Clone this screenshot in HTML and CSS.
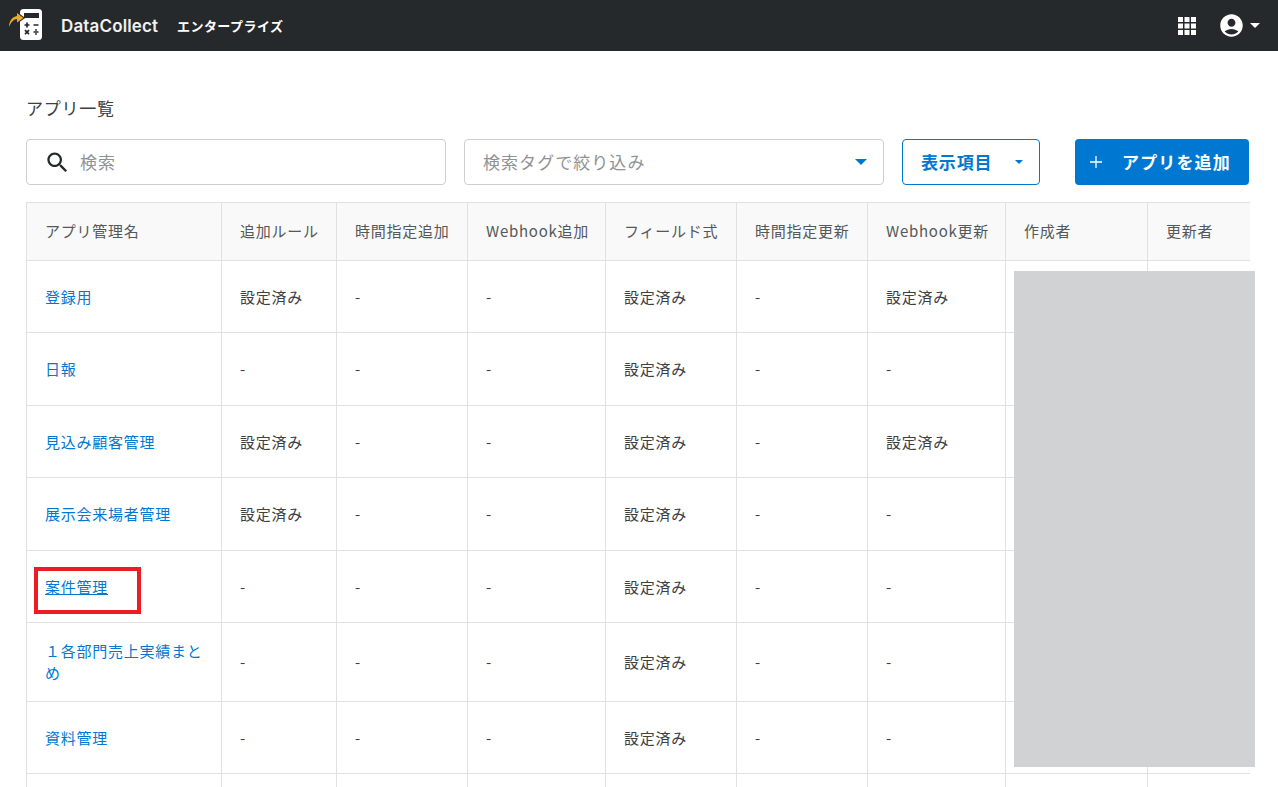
FILE: index.html
```html
<!DOCTYPE html>
<html lang="ja">
  <head>
    <meta charset="UTF-8" />
    <meta name="viewport" content="width=device-width, initial-scale=1.0" />
    <title>アプリ一覧</title>
    <link rel="stylesheet" href="styles.css">
  </head>
  <body>
    <header class="app-header">
      <div class="brand">
        <svg class="brand-logo" width="36" height="33" viewBox="0 0 36 33">
          <rect x="12" y="0" width="22" height="31" rx="3.500" fill="#fff" />
          <rect x="16" y="4" width="15" height="5" fill="#25292b" />
          <path d="M19 13.500v5M16.500 16h5M25.500 16h5M17 21.200l4 4M21 21.200l-4 4M25.500 23h5" stroke="#25292b" stroke-width="1.700" fill="none" />
          <circle cx="28" cy="21" r=".9" fill="#25292b" />
          <circle cx="28" cy="25" r=".9" fill="#25292b" />
          <path d="M1 18C1 12 4 8 9 7V4l6.500 5L9 13.500V10C6 10 3 13 1 18z" fill="#e9a825" stroke="#25292b" stroke-width="2" paint-order="stroke" />
        </svg>
        <span class="brand-name">DataCollect</span>
        <span class="brand-plan">エンタープライズ</span>
      </div>
      <div class="header-actions">
        <svg class="apps-icon" width="20" height="20" viewBox="0 0 20 20" fill="#fff">
          <rect x="1" y="1" width="5" height="5" /><rect x="7.500" y="1" width="5" height="5" /><rect x="14" y="1" width="5" height="5" />
          <rect x="1" y="7.500" width="5" height="5" /><rect x="7.500" y="7.500" width="5" height="5" /><rect x="14" y="7.500" width="5" height="5" />
          <rect x="1" y="14" width="5" height="5" /><rect x="7.500" y="14" width="5" height="5" /><rect x="14" y="14" width="5" height="5" />
        </svg>
        <svg class="account-icon" width="27" height="27" viewBox="0 0 24 24" fill="#fff">
          <path d="M12 2C6.480 2 2 6.480 2 12s4.480 10 10 10 10-4.480 10-10S17.520 2 12 2zm0 4c1.930 0 3.500 1.570 3.500 3.500S13.930 13 12 13s-3.500-1.570-3.500-3.500S10.070 6 12 6zm0 14c-2.030 0-4.430-.82-6.140-2.880C7.550 15.800 9.680 15 12 15s4.450.8 6.140 2.120C16.430 19.180 14.030 20 12 20z" />
        </svg>
        <span class="caret caret-white"></span>
      </div>
    </header>

    <main class="page">
      <h1 class="page-title">アプリ一覧</h1>

      <div class="toolbar">
        <label class="field search-field">
          <svg width="27" height="27" viewBox="0 0 24 24" fill="#25292b">
            <path d="M15.500 14h-.79l-.28-.27C15.410 12.590 16 11.110 16 9.500 16 5.910 13.090 3 9.500 3S3 5.910 3 9.500 5.910 16 9.500 16c1.610 0 3.090-.59 4.230-1.570l.27.28v.79l5 4.990L20.490 19l-4.990-5zm-6 0C7.010 14 5 11.990 5 9.500S7.010 5 9.500 5 14 7.010 14 9.500 11.990 14 9.500 14z" />
          </svg>
          <input type="text" placeholder="検索" />
        </label>
        <div class="field tag-field">
          <span class="tag-placeholder">検索タグで絞り込み</span>
          <span class="caret caret-blue"></span>
        </div>
        <button class="columns-btn">表示項目<span class="caret caret-blue-small"></span></button>
        <button class="add-btn">
          <svg width="14" height="14" viewBox="0 0 14 14"><path d="M7 1v12M1 7h12" stroke="#fff" stroke-width="1.300" fill="none" /></svg>
          アプリを追加
        </button>
      </div>

      <table class="app-table">
        <colgroup>
          <col class="col-name" /><col class="col-rule" /><col class="col-a" /><col class="col-b" /><col class="col-a" /><col class="col-a" /><col class="col-b" /><col class="col-c" /><col class="col-d" />
        </colgroup>
        <thead>
          <tr>
            <th>アプリ管理名</th>
            <th>追加ルール</th>
            <th>時間指定追加</th>
            <th>Webhook追加</th>
            <th>フィールド式</th>
            <th>時間指定更新</th>
            <th>Webhook更新</th>
            <th>作成者</th>
            <th>更新者</th>
          </tr>
        </thead>
        <tbody>
          <tr><td><a href="#">登録用</a></td><td>設定済み</td><td>-</td><td>-</td><td>設定済み</td><td>-</td><td>設定済み</td><td></td><td></td></tr>
          <tr><td><a href="#">日報</a></td><td>-</td><td>-</td><td>-</td><td>設定済み</td><td>-</td><td>-</td><td></td><td></td></tr>
          <tr><td><a href="#">見込み顧客管理</a></td><td>設定済み</td><td>-</td><td>-</td><td>設定済み</td><td>-</td><td>設定済み</td><td></td><td></td></tr>
          <tr><td><a href="#">展示会来場者管理</a></td><td>設定済み</td><td>-</td><td>-</td><td>設定済み</td><td>-</td><td>-</td><td></td><td></td></tr>
          <tr><td><a class="is-hover" href="#">案件管理</a></td><td>-</td><td>-</td><td>-</td><td>設定済み</td><td>-</td><td>-</td><td></td><td></td></tr>
          <tr><td><a href="#">１各部門売上実績まとめ</a></td><td>-</td><td>-</td><td>-</td><td>設定済み</td><td>-</td><td>-</td><td></td><td></td></tr>
          <tr><td><a href="#">資料管理</a></td><td>-</td><td>-</td><td>-</td><td>設定済み</td><td>-</td><td>-</td><td></td><td></td></tr>
          <tr><td></td><td></td><td></td><td></td><td></td><td></td><td></td><td></td><td></td></tr>
        </tbody>
      </table>

      <!-- 注釈と墨消し -->
      <div class="mark-box"></div>
      <div class="redact-box"></div>
    </main>
  </body>
</html>
```

FILE: styles.css
```css
* {
  box-sizing: border-box;
  margin: 0;
  padding: 0;
}

html,
body {
  height: 100%;
  overflow: hidden;
}

body {
  font-family: "Noto Sans CJK JP", "Noto Sans", sans-serif;
  font-size: 15px;
  color: #3c4043;
  background: #fff;
}

.app-header {
  display: flex;
  align-items: center;
  justify-content: space-between;
  height: 51px;
  padding: 0 18px 0 8px;
  background: #25292b;
  color: #fff;
}

.brand {
  display: flex;
  align-items: center;
}

.brand-logo {
  margin-right: 17px;
}

.brand-name {
  width: 116px;
  font-family: Inter, sans-serif;
  font-size: 17px;
  font-weight: 600;
  letter-spacing: .15px;
  color: #f0f0f0;
}

.brand-plan {
  font-size: 13px;
  font-weight: 700;
  letter-spacing: .45px;
}

.header-actions {
  display: flex;
  align-items: center;
}

.apps-icon {
  margin-right: 21px;
}

.account-icon {
  margin-right: 5px;
}

.caret {
  display: inline-block;
  width: 0;
  height: 0;
  border-left: 5px solid transparent;
  border-right: 5px solid transparent;
  border-top: 5px solid #fff;
}

.caret-blue {
  border-left-width: 6px;
  border-right-width: 6px;
  border-top: 6px solid #0078d2;
}

.caret-blue-small {
  margin-top: 2px;
  margin-left: 23px;
  border-left-width: 4.500px;
  border-right-width: 4.500px;
  border-top: 4.500px solid #0078d2;
}

.page {
  position: relative;
  height: calc(100% - 51px);
  padding: 44px 29px 0 26px;
  overflow: hidden;
}

.page-title {
  margin-bottom: 18px;
  font-size: 17px;
  font-weight: 400;
  line-height: 26px;
  letter-spacing: .75px;
}

.toolbar {
  display: flex;
  gap: 18px;
  margin-bottom: 17px;
}

.field {
  display: flex;
  align-items: center;
  width: 420px;
  height: 46px;
  border: 1px solid #ccced0;
  border-radius: 4px;
  background: #fff;
}

.search-field {
  gap: 9px;
  padding-left: 17px;
}

.search-field input {
  flex: 1;
  min-width: 0;
  margin-bottom: 2px;
  border: none;
  outline: none;
  font-family: inherit;
  font-size: 17px;
  letter-spacing: 1.050px;
  color: #25292b;
}

.search-field input::placeholder {
  color: #8f9396;
  opacity: 1;
}

.tag-field {
  justify-content: space-between;
  padding: 0 16px 0 18px;
}

.tag-placeholder {
  margin-bottom: 2px;
  font-size: 17px;
  letter-spacing: 1.050px;
  color: #8f9396;
}

button {
  height: 46px;
  padding-bottom: 2px;
  border-radius: 4px;
  font-family: inherit;
  font-size: 17px;
  font-weight: 700;
  letter-spacing: .85px;
  cursor: pointer;
}

.columns-btn {
  display: flex;
  align-items: center;
  width: 138px;
  padding-left: 18px;
  border: 1px solid #0078d2;
  background: #fff;
  color: #0078d2;
}

.add-btn {
  display: flex;
  align-items: center;
  gap: 19px;
  width: 174px;
  margin-left: 17px;
  padding-left: 14px;
  border: none;
  background: #0078d2;
  color: #fff;
  letter-spacing: 1.150px;
}

.add-btn svg {
  margin-top: 2px;
}

.app-table {
  width: 1223px;
  table-layout: fixed;
  border-collapse: collapse;
}

.col-name { width: 195px; }
.col-rule { width: 115px; }
.col-a { width: 131px; }
.col-b { width: 138px; }
.col-c { width: 142px; }
.col-d { width: 102px; }

.app-table th,
.app-table td {
  padding: 16.500px 18px 16px;
  border: 1px solid #dfe1e2;
  text-align: left;
  font-weight: 400;
  line-height: 22.500px;
  letter-spacing: .75px;
}

.app-table th {
  height: 57.900px;
  padding: 12px 0 12px 18px;
  background: #f9f9f9;
  color: #54585a;
  white-space: nowrap;
}

.app-table td {
  height: 72.500px;
}

.app-table th:last-child,
.app-table td:last-child {
  border-right: none;
}

.app-table a {
  color: #0078d2;
  text-decoration: none;
}

.app-table a.is-hover {
  text-decoration: underline;
}

.mark-box {
  position: absolute;
  left: 34px;
  top: 516px;
  width: 107px;
  height: 47px;
  border: 4px solid #ec1c24;
}

.redact-box {
  position: absolute;
  left: 1014px;
  top: 220px;
  width: 241px;
  height: 496px;
  background: #d1d2d4;
}
```
